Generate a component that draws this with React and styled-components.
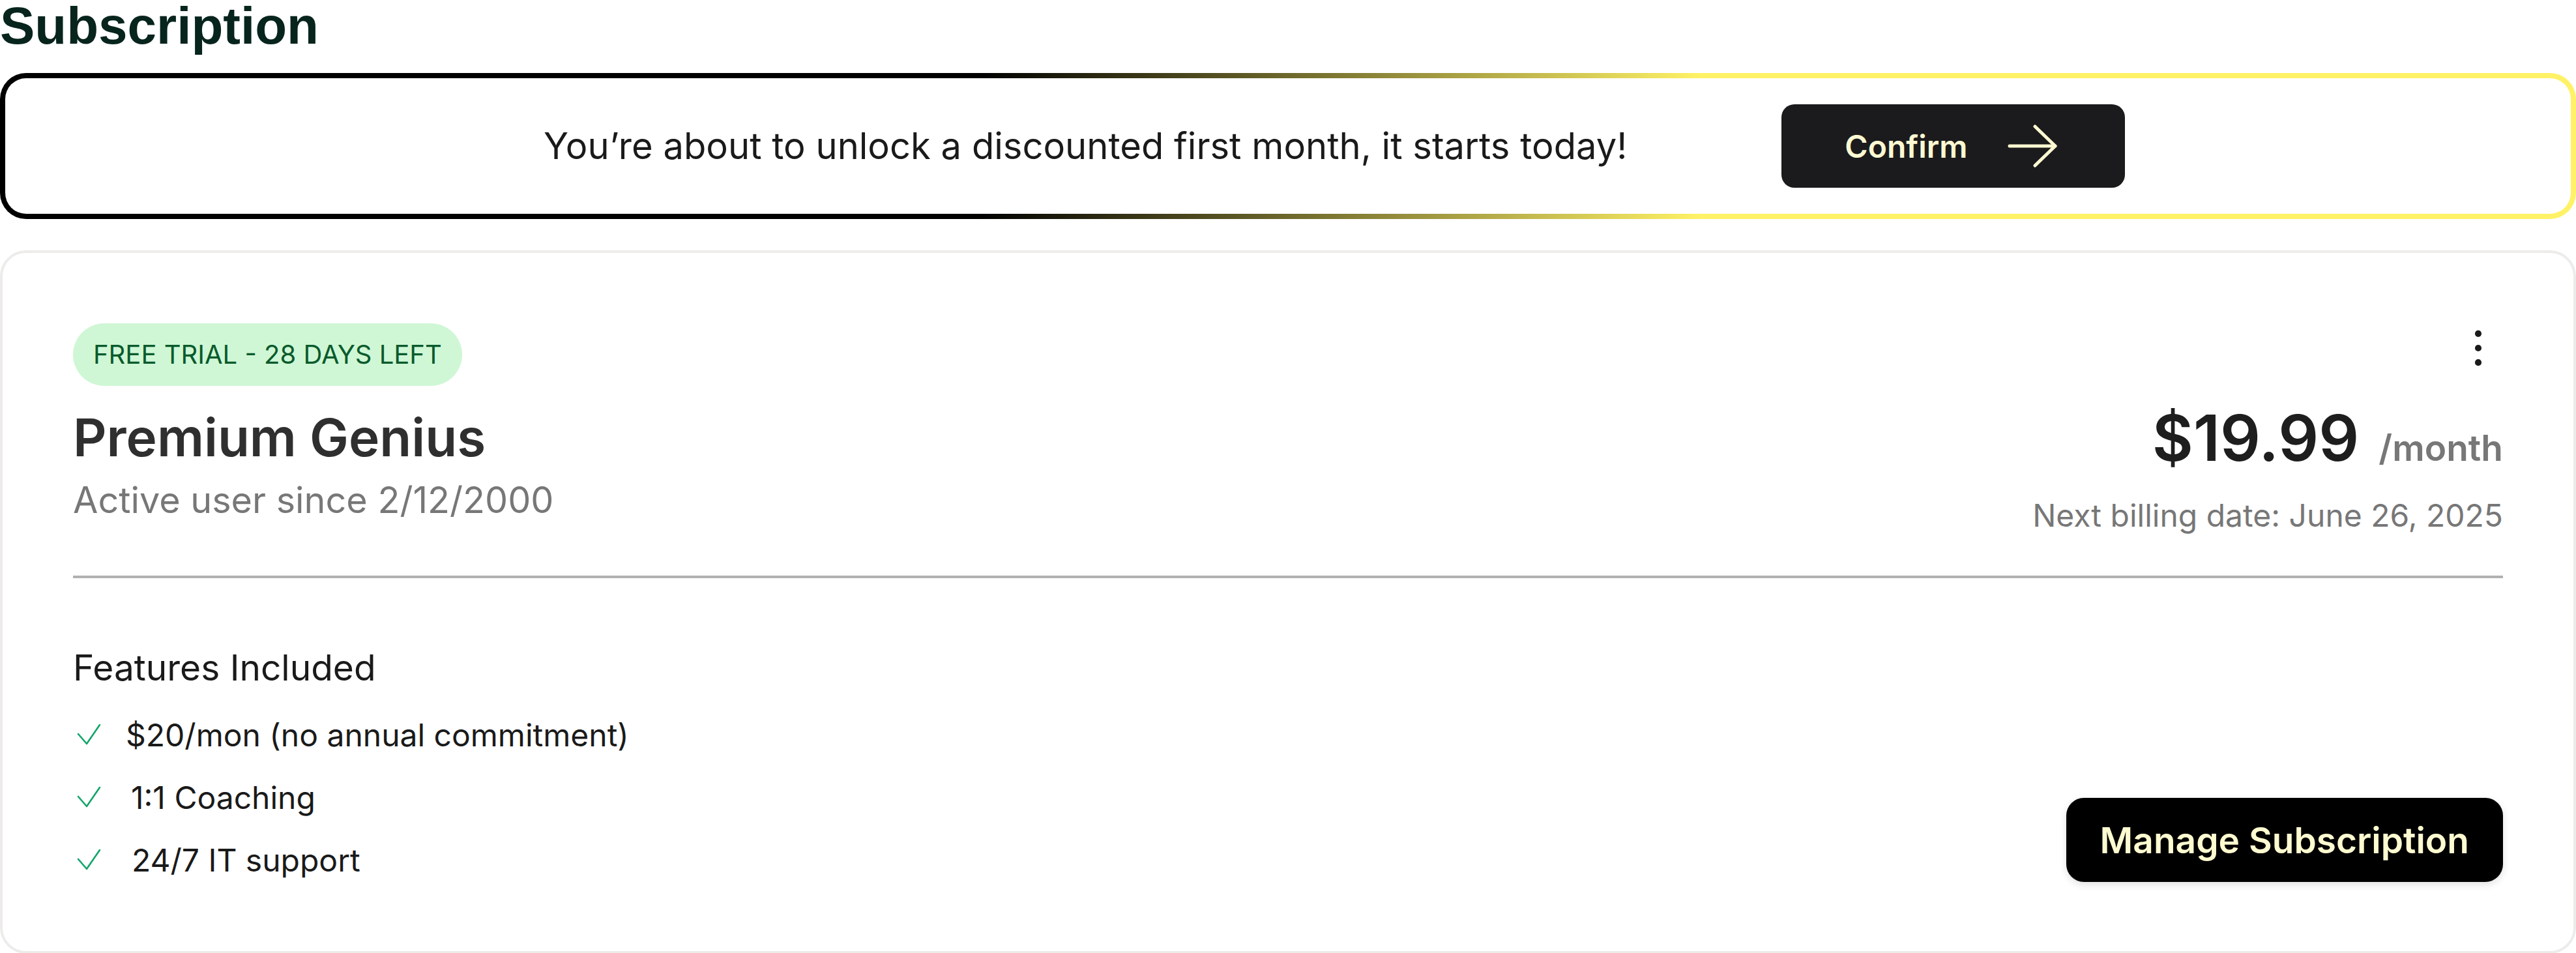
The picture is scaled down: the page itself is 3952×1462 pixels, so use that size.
import React from 'react'
import styled, { createGlobalStyle } from 'styled-components'

const GlobalStyle = createGlobalStyle`
  html, body {
    margin: 0;
    padding: 0;
    background: #ffffff;
  }
  body {
    font-family: Inter, "Noto Sans", sans-serif;
    color: #1a1a1a;
  }
  * {
    box-sizing: border-box;
  }
`

const Page = styled.div`
  width: 3952px;
  display: flex;
  flex-direction: column;
`

const Title = styled.h1`
  margin: 0;
  font-family: "Liberation Sans", Arial, sans-serif;
  font-weight: 700;
  font-size: 80px;
  line-height: 80px;
  color: #07241d;
`

const Banner = styled.div`
  margin-top: 32px;
  height: 224px;
  border: 8px solid transparent;
  border-radius: 40px;
  background:
    linear-gradient(#ffffff, #ffffff) padding-box,
    linear-gradient(90deg, #000000 38%, #fff266 66%) border-box;
  display: flex;
  align-items: center;
  padding-left: 826px;
  gap: 237px;
`

const BannerText = styled.p`
  margin: 0;
  font-size: 56.1px;
  color: #1a1a1a;
`

const ConfirmButton = styled.button`
  display: flex;
  align-items: center;
  gap: 61px;
  height: 128px;
  padding: 0 104px 0 97px;
  border: none;
  border-radius: 20px;
  background: #1b1b1d;
  color: #fff9d2;
  font-family: Inter, sans-serif;
  font-size: 48px;
  font-weight: 600;
`

const Card = styled.section`
  margin-top: 48px;
  border: 4px solid #edecea;
  border-radius: 40px;
  padding: 108px 108px 92px;
`

const Header = styled.div`
  display: flex;
  justify-content: space-between;
  align-items: flex-start;
`

const Column = styled.div`
  display: flex;
  flex-direction: column;
  align-items: ${p => (p.$end ? 'flex-end' : 'flex-start')};
`

const Badge = styled.span`
  height: 96px;
  line-height: 96px;
  padding: 0 31px;
  border-radius: 48px;
  background: #cff7d5;
  color: #0a5a2c;
  font-size: 40px;
  text-transform: uppercase;
`

const PlanName = styled.h2`
  margin: 31px 0 0;
  font-size: 80px;
  line-height: 96px;
  font-weight: 600;
  color: #2f2f2f;
`

const Since = styled.p`
  margin: 15px 0 0;
  font-size: 55.7px;
  line-height: 66px;
  color: #777777;
`

const Kebab = styled.svg`
  width: 76px;
  height: 76px;
  color: #1a1a1a;
`

const PriceRow = styled.div`
  margin-top: 41px;
  display: flex;
  align-items: baseline;
  gap: 30px;
`

const Price = styled.span`
  font-size: 97px;
  line-height: 118px;
  font-weight: 600;
  color: #1e1e1e;
`

const Per = styled.span`
  font-size: 55px;
  font-weight: 600;
  color: #777777;
`

const Billing = styled.p`
  margin: 31px 0 0;
  font-size: 48px;
  line-height: 58px;
  color: #777777;
`

const Divider = styled.hr`
  margin: 63px 0 0;
  height: 4px;
  border: none;
  background: #b1b1b1;
`

const Bottom = styled.div`
  margin-top: 104px;
  display: flex;
  justify-content: space-between;
  align-items: flex-end;
`

const FeaturesTitle = styled.h3`
  margin: 0;
  font-size: 55px;
  line-height: 66px;
  font-weight: 400;
  color: #1a1a1a;
`

const FeatureList = styled.ul`
  margin: 22px 0 0;
  padding: 0;
  list-style: none;
`

const Feature = styled.li`
  display: flex;
  align-items: center;
  gap: 37px;
  height: 96px;
  font-size: 48px;
  color: #1a1a1a;
`

const FeatureText = styled.span`
  padding-left: ${p => p.$indent || 0}px;
`

const ManageButton = styled.button`
  margin-bottom: 14px;
  height: 129px;
  padding: 0 52px;
  border: none;
  border-radius: 27px;
  background: #000000;
  color: #fffbd0;
  font-family: Inter, sans-serif;
  font-size: 55px;
  font-weight: 600;
  box-shadow: 0 4px 12px rgba(0, 0, 0, 0.12);
`

const ArrowIcon = () => (
  <svg width="76" height="66" viewBox="0 0 76 66" fill="none" stroke="currentColor" strokeWidth="5" strokeLinecap="round" strokeLinejoin="round">
    <path d="M3 33H73" />
    <path d="M42 3L73 33L42 63" />
  </svg>
)

const CheckIcon = () => (
  <svg width="44" height="34" viewBox="0 0 44 34" fill="none" stroke="#12a56a" strokeWidth="2.6" strokeLinecap="round" strokeLinejoin="round">
    <path d="M8 16L21 31L41 2" />
  </svg>
)

const features = [
  { label: '$20/mon (no annual commitment)', indent: 0 },
  { label: '1:1 Coaching', indent: 8 },
  { label: '24/7 IT support', indent: 9 },
]

export default function App() {
  return (
    <>
      <GlobalStyle />
      <Page>
        <Title>Subscription</Title>
        <Banner>
          <BannerText>You’re about to unlock a discounted first month, it starts today!</BannerText>
          <ConfirmButton>
            Confirm
            <ArrowIcon />
          </ConfirmButton>
        </Banner>
        <Card>
          <Header>
            <Column>
              <Badge>Free Trial - 28 Days Left</Badge>
              <PlanName>Premium Genius</PlanName>
              <Since>Active user since 2/12/2000</Since>
            </Column>
            <Column $end>
              <Kebab viewBox="0 0 24 24" fill="currentColor">
                <circle cx="12" cy="5" r="1.6" />
                <circle cx="12" cy="12" r="1.6" />
                <circle cx="12" cy="19" r="1.6" />
              </Kebab>
              <PriceRow>
                <Price>$19.99</Price>
                <Per>/month</Per>
              </PriceRow>
              <Billing>Next billing date: June 26, 2025</Billing>
            </Column>
          </Header>
          <Divider />
          <Bottom>
            <div>
              <FeaturesTitle>Features Included</FeaturesTitle>
              <FeatureList>
                {features.map(f => (
                  <Feature key={f.label}>
                    <CheckIcon />
                    <FeatureText $indent={f.indent}>{f.label}</FeatureText>
                  </Feature>
                ))}
              </FeatureList>
            </div>
            <ManageButton>Manage Subscription</ManageButton>
          </Bottom>
        </Card>
      </Page>
    </>
  )
}
